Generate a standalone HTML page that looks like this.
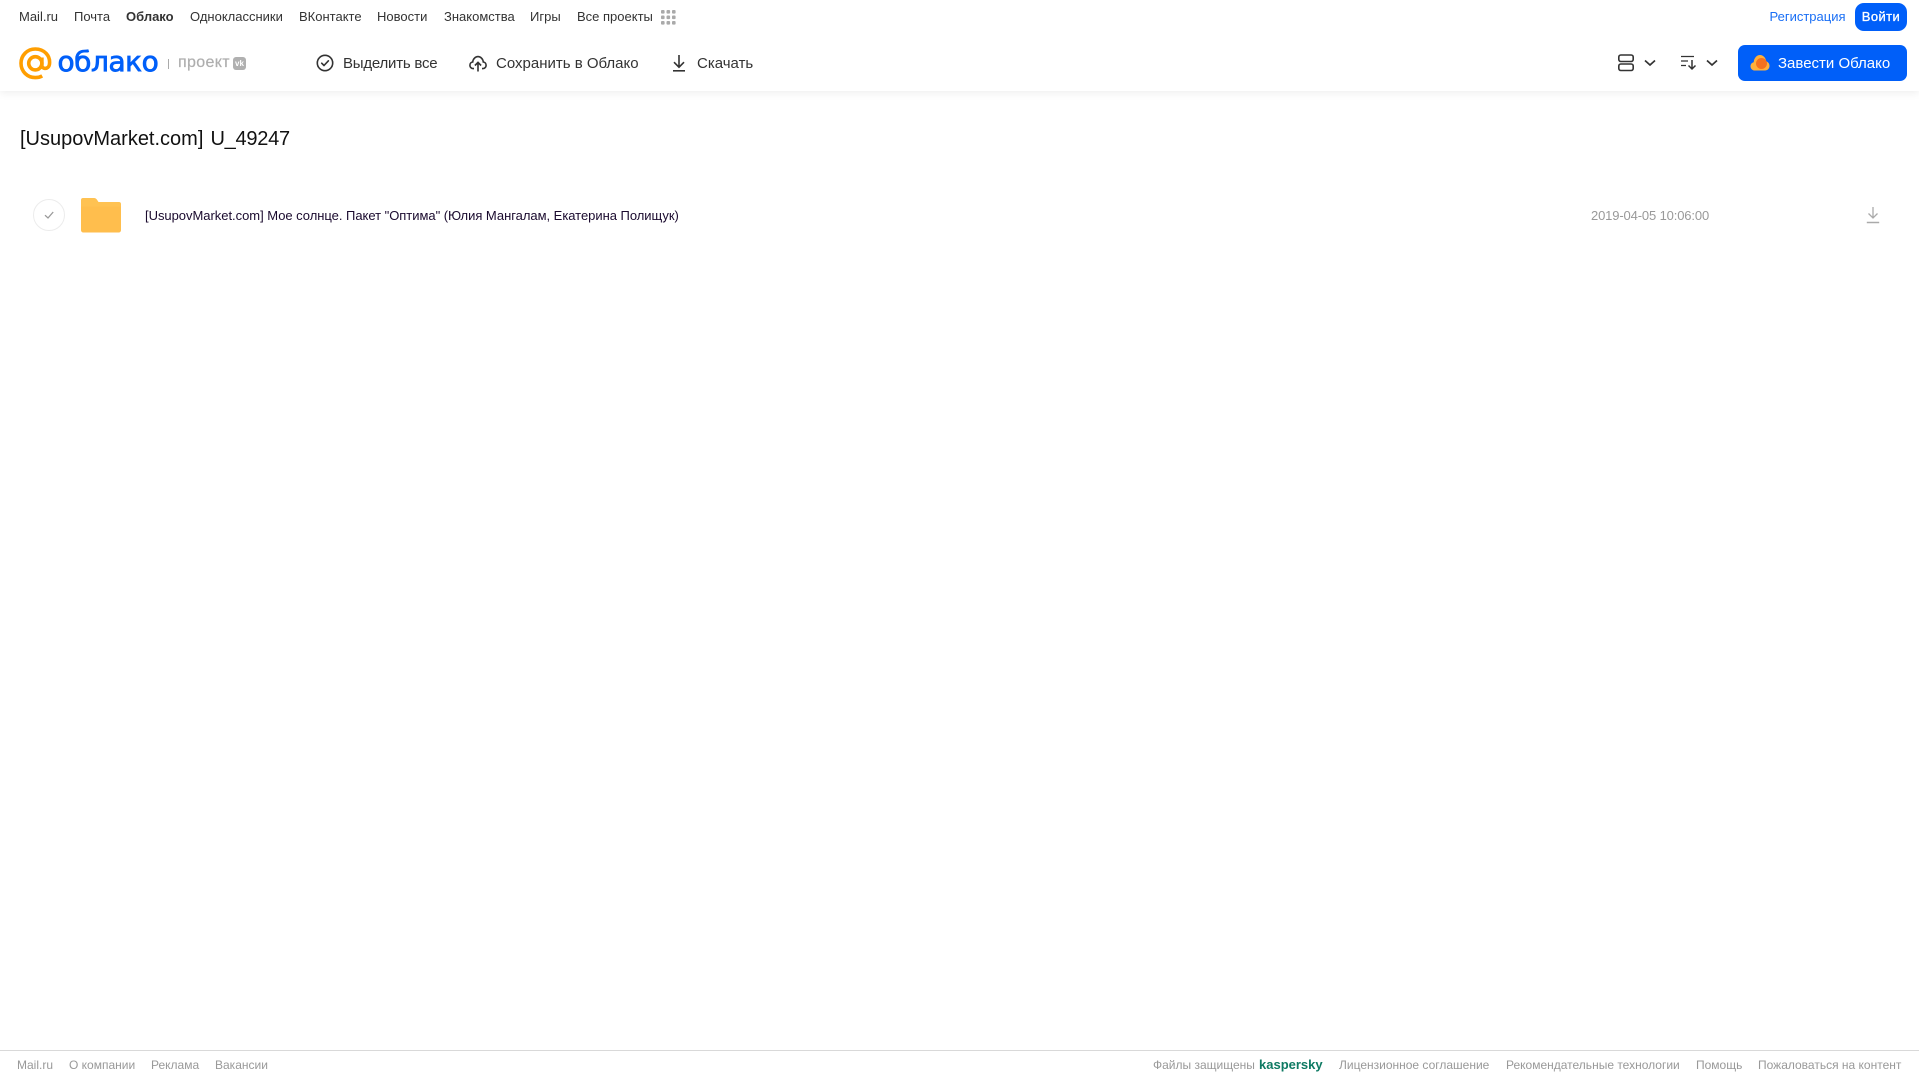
<!DOCTYPE html>
<html lang="ru"><head><meta charset="utf-8"><title>[UsupovMarket.com] U_49247</title>
<style>
html,body{margin:0;padding:0;background:#fff;width:1919px;height:1079px;overflow:hidden}
body{position:relative;font-family:"Liberation Sans",sans-serif}
.t{position:absolute;white-space:nowrap;line-height:20px}
.n{font-size:13px;top:7px;color:#333}
.a{font-size:15px;top:53px;color:#333}
.f{font-size:12px;top:1055px;color:#999}
svg{position:absolute;display:block}
</style></head><body>
<div style="position:absolute;left:0;top:0;width:1919px;height:91px;background:#fff;box-shadow:0 2px 8px rgba(0,0,0,.07)"></div>

<div class="t n" style="left:19px">Mail.ru</div>
<div class="t n" style="left:74px">Почта</div>
<div class="t n" style="left:126px;font-weight:bold">Облако</div>
<div class="t n" style="left:190px">Одноклассники</div>
<div class="t n" style="left:299px">ВКонтакте</div>
<div class="t n" style="left:377px">Новости</div>
<div class="t n" style="left:444px">Знакомства</div>
<div class="t n" style="left:530px">Игры</div>
<div class="t n" style="left:577px">Все проекты</div>
<svg style="left:661px;top:10px" width="15" height="15" fill="#aaa"><rect x="0" y="0" width="3.6" height="3.6" rx="1"/><rect x="5.5" y="0" width="3.6" height="3.6" rx="1"/><rect x="11" y="0" width="3.6" height="3.6" rx="1"/><rect x="0" y="5.5" width="3.6" height="3.6" rx="1"/><rect x="5.5" y="5.5" width="3.6" height="3.6" rx="1"/><rect x="11" y="5.5" width="3.6" height="3.6" rx="1"/><rect x="0" y="11" width="3.6" height="3.6" rx="1"/><rect x="5.5" y="11" width="3.6" height="3.6" rx="1"/><rect x="11" y="11" width="3.6" height="3.6" rx="1"/></svg>

<div class="t n" style="left:1769.5px;color:#1a6ff5">Регистрация</div>
<div style="position:absolute;left:1855px;top:3px;width:52px;height:28px;border-radius:9px;background:#005ff9;color:#fff;font-size:13px;line-height:28px;text-align:center;-webkit-text-stroke:.3px #fff;letter-spacing:.4px">Войти</div>

<svg style="left:19px;top:47px" width="33" height="33" viewBox="0 0 33 33" fill="none" stroke="#ff9e00" stroke-width="3.6"><circle cx="16.3" cy="16.3" r="6.6"/><path d="M22.9 10.5V18.5C22.9 22.5 29.6 22.5 30.4 17.6C31.8 8.5 25 2 16.3 2C8.2 2 2 8.4 2 16.3C2 24.6 8.4 30.6 16.3 30.6C19 30.6 21.2 30 23.2 28.9"/></svg>
<div class="t" style="left:57.5px;top:46px;line-height:32px;font-family:'DejaVu Sans',sans-serif;font-size:28px;letter-spacing:-.45px;color:#005ff9;-webkit-text-stroke:.8px #005ff9">облако</div>
<div style="position:absolute;left:168px;top:59px;width:1px;height:10px;background:#aaa"></div>
<div class="t" style="left:178px;top:53px;font-size:16px;color:#aeaeae;letter-spacing:.35px;-webkit-text-stroke:.2px #aeaeae">проект</div>
<div style="position:absolute;left:233px;top:57px;width:13px;height:13px;border-radius:3px;background:#b0b0b0;color:#fff;font-size:8px;font-weight:bold;line-height:13px;text-align:center">vk</div>

<svg style="left:316px;top:54px" width="18" height="18" viewBox="0 0 18 18" fill="none" stroke="#333" stroke-width="1.6"><circle cx="9" cy="9" r="7.7"/><path d="M5.7 9.2L8 11.5L12.4 6.8" stroke-linecap="round" stroke-linejoin="round"/></svg>
<div class="t a" style="left:343px;letter-spacing:-.22px;top:54px">Выделить все</div>
<svg style="left:469px;top:54px" width="18" height="18" viewBox="0 0 18 18" fill="none" stroke="#333" stroke-width="1.6"><path d="M5 14.6H4.2C2.2 14.6 .9 13 .9 11.2C.9 9.5 2.1 8.2 3.7 8C4 4.9 6.3 2.6 9 2.6C11.7 2.6 14 4.9 14.3 8C15.9 8.2 17.1 9.5 17.1 11.2C17.1 13 15.8 14.6 13.8 14.6H13"/><path d="M9 17.5V8.5M5.9 11.5L9 8.4L12.1 11.5"/></svg>
<div class="t a" style="left:496px;top:54px">Сохранить в Облако</div>
<svg style="left:671px;top:54px" width="16" height="18" viewBox="0 0 16 18" fill="none" stroke="#333" stroke-width="1.6"><path d="M8 1V13M3 8.2L8 13.2L13 8.2"/><path d="M2 16.8H14"/></svg>
<div class="t a" style="left:697px;top:54px">Скачать</div>

<svg style="left:1618px;top:54px" width="16" height="18" viewBox="0 0 16 18" fill="none" stroke="#333" stroke-width="1.6"><rect x=".8" y="1" width="14.4" height="6.5" rx="2"/><rect x=".8" y="10" width="14.4" height="6.5" rx="2"/></svg>
<svg style="left:1644px;top:59px" width="12" height="8" viewBox="0 0 12 8" fill="none" stroke="#333" stroke-width="1.7"><path d="M1 1.5L6 6L11 1.5"/></svg>
<svg style="left:1681px;top:55px" width="17" height="16" viewBox="0 0 17 16" fill="none" stroke="#333" stroke-width="1.3"><path d="M0 1.5H13M0 6H7M0 10.5H5"/><path d="M11 5V14M7.5 10.5L11 14L14.5 10.5" stroke-width="1.5"/></svg>
<svg style="left:1706px;top:59px" width="12" height="8" viewBox="0 0 12 8" fill="none" stroke="#333" stroke-width="1.7"><path d="M1 1.5L6 6L11 1.5"/></svg>
<div style="position:absolute;left:1738px;top:45px;width:169px;height:36px;border-radius:7px;background:#005ff9"></div>
<svg style="left:1750px;top:54px" width="20" height="17" viewBox="0 0 20 17"><path d="M5 16.5C2.2 16.5 .5 14.5 .5 12.2C.5 10 2 8.5 3.7 8.2C4 4 6.8 1 10 1C13.2 1 15.8 3.8 16.2 7.3C18.2 8 19.5 9.8 19.5 12C19.5 14.5 17.5 16.5 15 16.5Z" fill="#ffb03a"/><circle cx="11.5" cy="9.5" r="5.5" fill="#f4711f"/></svg>
<div class="t a" style="left:1778px;color:#fff;top:54px">Завести Облако</div>

<div class="t" style="left:20px;top:125px;line-height:28px;font-size:20px;color:#111;word-spacing:1.5px">[UsupovMarket.com] <span style="letter-spacing:-.25px">U_49247</span></div>

<svg style="left:33px;top:199px" width="32" height="32" viewBox="0 0 32 32" fill="none"><circle cx="16" cy="16" r="15.5" stroke="#ececec"/><path d="M12 16.2L15 19L20.2 13" stroke="#999" stroke-width="1.3"/></svg>
<svg style="left:81px;top:198px" width="40" height="35" viewBox="0 0 40 35"><path d="M2 0H13C14.5 0 15.5 .8 16.5 2.5L17.5 4H38C39.2 4 40 4.8 40 6V12H0V2C0 .8 .8 0 2 0Z" fill="#ffc252"/><path d="M0 8.5H40V32C40 33.5 39 34.5 37.5 34.5H2.5C1 34.5 0 33.5 0 32Z" fill="#ffbe4d"/></svg>
<div class="t" style="left:145px;top:206px;font-size:13px;letter-spacing:-.03px;color:#1a0a2e">[UsupovMarket.com] Мое солнце. Пакет "Оптима" (Юлия Мангалам, Екатерина Полищук)</div>
<div class="t" style="left:1591px;top:206px;font-size:13px;letter-spacing:-.14px;color:#999">2019-04-05 10:06:00</div>
<svg style="left:1866px;top:206px" width="14" height="18" viewBox="0 0 14 18" fill="none" stroke="#aaa" stroke-width="1.3"><path d="M7 1V12M2.5 7.5L7 12L11.5 7.5"/><path d="M.8 16.5H13.2" stroke-width="1.5"/></svg>

<div style="position:absolute;left:0;top:1050px;width:1919px;height:1px;background:#d9d9d9"></div>
<div class="t f" style="left:17px">Mail.ru</div>
<div class="t f" style="left:69px">О компании</div>
<div class="t f" style="left:151px">Реклама</div>
<div class="t f" style="left:215px">Вакансии</div>
<div class="t f" style="left:1153px">Файлы защищены</div>
<div class="t f" style="left:1259px;color:#0e7a63;font-weight:bold;font-size:13px">kaspersky</div>
<div class="t f" style="left:1339px">Лицензионное соглашение</div>
<div class="t f" style="left:1506px">Рекомендательные технологии</div>
<div class="t f" style="left:1696px">Помощь</div>
<div class="t f" style="left:1758px">Пожаловаться на контент</div>
</body></html>
